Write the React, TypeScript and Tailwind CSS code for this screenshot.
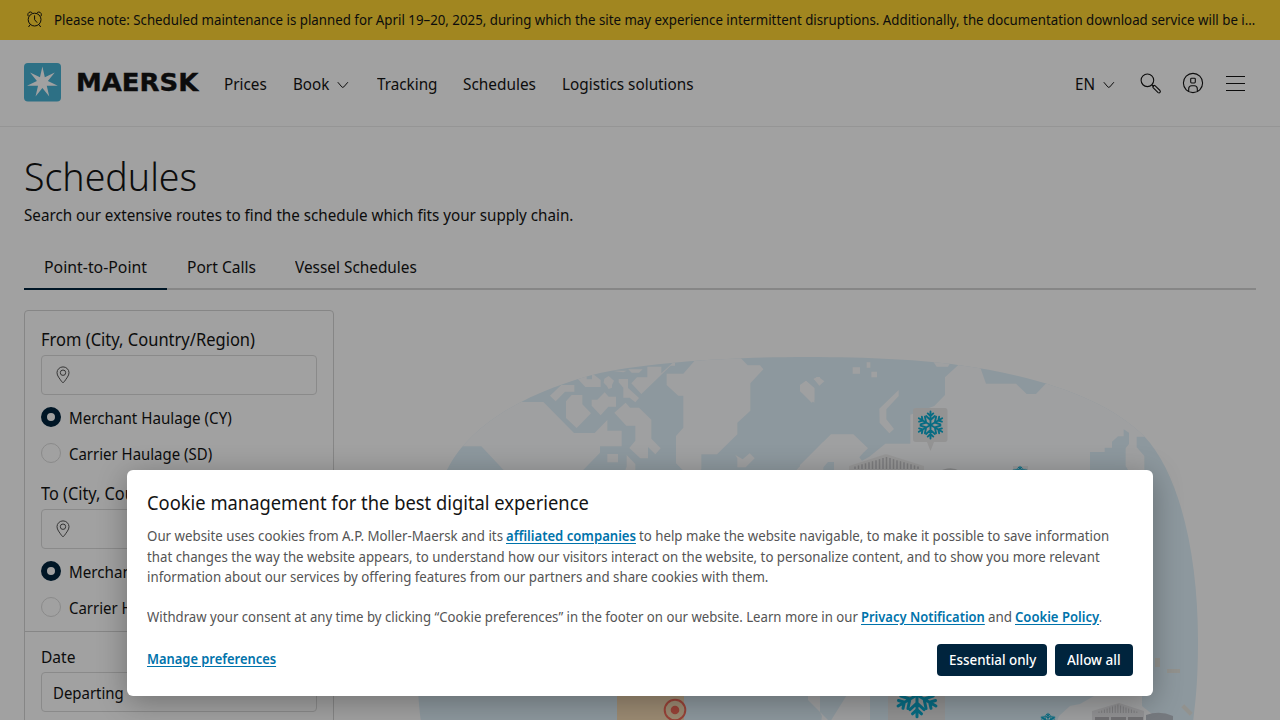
import { useLayoutEffect, useRef, useState } from "react";
import type { ReactNode } from "react";

/* Single-line text that is condensed or widened to an exact measure. */
function T({ w, className = "", children }: { w: number; className?: string; children: ReactNode }) {
  const ref = useRef<HTMLSpanElement>(null);
  const [k, setK] = useState(1);
  useLayoutEffect(() => {
    if (ref.current) setK(w / ref.current.offsetWidth);
  }, [w]);
  return (
    <span className={"flex shrink-0 whitespace-nowrap " + className} style={{ width: w }}>
      <span ref={ref} className="block shrink-0 origin-left" style={{ transform: `scaleX(${k})` }}>
        {children}
      </span>
    </span>
  );
}

const star = Array.from({ length: 14 }, (_, i) => {
  const a = (Math.PI * i) / 7;
  const r = i % 2 ? 5.6 : 15.8;
  return `${(18.4 + r * Math.sin(a)).toFixed(2)},${(19.3 - r * Math.cos(a)).toFixed(2)}`;
}).join(" ");

function Logo() {
  return (
    <svg width="37" height="39" viewBox="0 0 37 39" className="mb-0.5 shrink-0">
      <rect width="37" height="38.6" rx="4" fill="#48b1d3" />
      <polygon points={star} fill="#fff" />
    </svg>
  );
}

function Chevron() {
  return (
    <svg width="12" height="8" viewBox="0 0 12 8" fill="none" stroke="#141414" strokeWidth="1">
      <path d="M.8 1.2 L4.8 5.9 Q5.8 7 6.8 5.9 L10.9 1.2" />
    </svg>
  );
}

function AlarmClock() {
  return (
    <svg width="16" height="17" viewBox="0 0 16 17" fill="none" stroke="#141414" strokeWidth="1" className="mb-0.5">
      <circle cx="7.600" cy="8.6" r="6.4" />
      <path d="M7.600 4.400v4.300l2.600 3M3.200 13.6L1.500 16M12 13.6l1.700 2.400M1.200 5.2C.2 3.400 1.300 1 3.400 1c.9 0 1.500.4 1.900 1.100M14 5.200C15 3.400 13.900 1 11.800 1c-.9 0-1.500.4-1.900 1.100" />
    </svg>
  );
}

function Search() {
  return (
    <svg width="22" height="22" viewBox="0 0 22 22" fill="none" stroke="#141414" strokeWidth="1.1">
      <circle cx="7.4" cy="7.3" r="6.3" />
      <path d="M11.9 11.8l2 2M13.1 14.7q-.8-1 .1-1.9t1.8-.1l5 4.8q.8.9 0 1.9t-1.9.2z" />
    </svg>
  );
}

function Account() {
  return (
    <svg width="22" height="22" viewBox="0 0 22 22" fill="none" stroke="#141414" strokeWidth="1.1">
      <circle cx="11" cy="11" r="9.6" />
      <rect x="8.7" y="6.2" width="4.6" height="4.8" rx=".9" />
      <path d="M6.7 19.3v-2.6q0-3 3-3h2.6q3 0 3 3v2.6" />
    </svg>
  );
}

function Pin() {
  return (
    <svg width="14" height="18" viewBox="0 0 14 18" fill="none" stroke="#545454" strokeWidth="1">
      <path d="M7 16.5Q6.2 16.5 5.6 15.5C3.6 12.400 1 9.800 1 6.700A6 5.800 0 0 1 13 6.700C13 9.800 10.400 12.400 8.400 15.500Q7.800 16.500 7 16.500Z" />
      <circle cx="7" cy="6.700" r="2.700" />
    </svg>
  );
}

function Flake({ x, y, s }: { x: number; y: number; s: number }) {
  return (
    <g transform={`translate(${x} ${y}) scale(${s})`} stroke="#0cacd0" strokeWidth="1.850" strokeLinecap="round" fill="none">
      {[0, 60, 120, 180, 240, 300].map((a) => (
        <path key={a} transform={`rotate(${a})`} d="M0 0V-13.500M0-5L-4.400-9M0-5L4.400-9M0-9L-2.800-11.600M0-9L2.800-11.600" />
      ))}
    </g>
  );
}

const GLOBE =
  "M807 357C870 357 925 360 958 365C1040 376 1108 400 1144 436C1180 474 1198 555 1198 640C1198 680 1196 700 1192 730H422C418 700 417 680 417 640C417 575 428 507 447 470C473 418 540 388 600 373C660 361 740 357 807 357Z";

function WorldMap() {
  return (
    <svg viewBox="334 310 922 410" width="922" height="410" className="block shrink-0">
      <defs>
        <clipPath id="globe">
          <path d={GLOBE} />
        </clipPath>
      </defs>
      <path d={GLOBE} fill="#e0f1fa" />
      <g clipPath="url(#globe)" fill="#fcfdff">
        <g transform="translate(400 340) scale(.33333)">
          <path d="M100 186H430L522 279H584L622 240V272H665V319H600V338L540 400H320L244 319H100Z" />
          <path d="M884 62L850 101H800V135L835 167H850V263L828 288V370L858 400H890L904 388V343H951L1012 283V248L1051 212V130L1090 88L1080 76H1043L1018 50Z" />
          <path d="M484 135H523V155H495L467 184L450 167ZM515 165H547V193L573 220L530 264L498 234V184ZM533 116L560 105V118H576V100L602 120V141H556ZM613 116L626 108L642 122L636 135V143L626 147L620 137L611 128ZM656 117H684V144L717 174L706 187L689 173H670V143L656 127ZM575 179H592L614 157L626 170H648V200H625L602 226L575 197ZM643 218L677 188L690 203H717L754 239V296L782 325L766 343L744 321V355H721L688 324L706 302V257H679ZM742 80H784V100L825 62V77H812L784 104V104L724 162L694 130L711 112H742ZM685 88H728L717 98H695ZM635 92H680L670 97ZM622 342H654V367H622ZM680 345L706 372V400H672L680 380ZM1006 345L1028 358L1049 340L1064 355L1037 382H1012V355Z" />
          <path d="M1200 135L1218 122L1243 145V180L1235 188L1200 153ZM1241 118L1250 111H1260V130ZM1180 400L1270 305V400Z" />
        </g>
        <g transform="translate(800 340) scale(.33333)">
          <path d="M0 140L18 123L43 144V188L0 153ZM41 116L56 111L73 124L58 137ZM158 82H180V101H158ZM200 67H211V83H200ZM214 95H231V112H214ZM238 206L296 150V168L259 208V238L282 267L268 280L239 248ZM398 62L450 70L444 80H410Z" />
          <path d="M0 375L93 283H160L204 325L190 338L178 352L186 362L208 350L256 311H331V224L403 198L435 165V112L475 75L540 80L558 131H648L680 162H708L750 118L1000 240L1040 290H1010V322L1033 348V400H990L977 378V325L987 312V278L971 268V289H954L936 305V323H914V336H870V400H102V366H84L54 400H0Z" />
        </g>
        <path d="M820 680H870V730H820L822 716L820 712ZM1054 730L1059 716L1070 706L1080 704L1094 696L1110 680H1142V706L1162 722V730ZM808 694V700L830 722L850 690Z" />
        <g fill="#e8e7e1">
          <rect x="1155" y="658" width="5" height="9" />
          <rect x="1167" y="669" width="13" height="4" />
          <rect x="-6" y="-2" width="12" height="4" transform="translate(1187 710) rotate(45)" />
        </g>
      </g>
      <path d="M617 690H684V730H617Z" fill="#f7dcb6" />
      <circle cx="675" cy="710" r="10.300" fill="none" stroke="#f26a59" strokeWidth="2" />
      <circle cx="675" cy="710" r="4.300" fill="#f26a59" />
      <path d="M916 408H945Q947.500 408 947.500 411V439Q947.500 442 945 442H934L930.500 451L927 442H916Q913 442 913 439V411Q913 408 916 408Z" fill="#e9e9e9" />
      <Flake x={930.500} y={425} s={1} />
      <path d="M888 680H945V730H888Z" fill="#e7e7e8" />
      <Flake x={917} y={695} s={1.620} />
      <rect x="1013" y="466" width="15" height="10" fill="#ededee" />
      <Flake x={1020} y={474} s={0.580} />
      <Flake x={1048} y={721} s={0.580} />
      <path d="M849 470V466L886 454L924 466V474H849Z" fill="#f0f0f0" />
      <g stroke="#c4c4c7" strokeWidth="1.500">
        {Array.from({ length: 19 }, (_, i) => (
          <path key={i} d={`M${855 + i * 3.500} 469V${457 + Math.abs(i - 9) * 1.050}`} />
        ))}
      </g>
      <path d="M938 472Q950 465 960 471V474H938Z" fill="#d2d5d6" />
      <path d="M1092 720V711L1119 703L1144 711V720Z" fill="#e8e8ea" />
      <g stroke="#c3c3c7" strokeWidth="1">
        {Array.from({ length: 15 }, (_, i) => (
          <path key={i} d={`M${1099 + i * 2.700} 713V${704.500 + Math.abs(i - 7) * 1}`} />
        ))}
      </g>
      <path d="M1095 717H1109V720H1095ZM1111 717H1126V720H1111ZM1128 717H1143V720H1128Z" fill="#b5b3b8" />
      <path d="M1146 715Q1160 710 1173 716V720H1146Z" fill="#bcc1ca" />
    </svg>
  );
}

function Radio({ on, w, children }: { on?: boolean; w: number; children: string }) {
  return (
    <div className="flex h-5 items-center gap-2">
      <span
        className={
          on
            ? "size-5 shrink-0 rounded-full border-[6px] border-[#00243d] bg-white"
            : "size-5 shrink-0 rounded-full border border-[#dbdbdb] bg-white"
        }
      />
      <T w={w} className="pt-0.5">{children}</T>
    </div>
  );
}

function PlaceField({ label, w }: { label: string; w: number }) {
  return (
    <div>
      <div className="flex h-[26px] items-center pb-0.5 text-[17.500px]">
        <T w={w}>{label}</T>
      </div>
      <div className="mt-0.5 flex h-10 items-center rounded border border-[#dbdbdb] bg-white pl-[14px]">
        <Pin />
      </div>
      <div className="mt-3 flex flex-col gap-4">
        <Radio on w={163}>Merchant Haulage (CY)</Radio>
        <Radio w={143}>Carrier Haulage (SD)</Radio>
      </div>
    </div>
  );
}

function SearchPanel() {
  return (
    <section className="h-[420px] w-[310px] shrink-0 rounded-t-sm border border-[#d4d4d4]">
      <div className="flex flex-col gap-[18px] px-4 pt-4 pb-[14px]">
        <PlaceField label="From (City, Country/Region)" w={214} />
        <PlaceField label="To (City, Country/Region)" w={189} />
      </div>
      <div className="border-t border-[#d4d4d4] px-4 pt-[14px]">
        <div className="flex h-6 items-center pb-0.5">
          <T w={34}>Date</T>
        </div>
        <div className="mt-[2px] flex h-10 items-center rounded border border-[#dbdbdb] bg-white pt-0.5 pl-[11px]">
          <T w={71}>Departing</T>
        </div>
      </div>
    </section>
  );
}

function CookieDialog() {
  const link = "font-semibold text-[#0073ab] underline underline-offset-2";
  return (
    <div className="absolute top-[470px] left-[127px] h-[226px] w-[1026px] rounded-md bg-white px-5 pt-[18px] text-sm text-[#545454] shadow-[0_6px_30px_rgba(0,0,0,0.3)]">
      <div className="flex h-[30px] items-center text-xl text-[#141414]">
        <T w={442}>Cookie management for the best digital experience</T>
      </div>
      <div className="mt-2 leading-5">
        <div className="flex h-[20.500px] gap-[3px]">
          <T w={356}>Our website uses cookies from A.P. Moller-Maersk and its</T>
          <T w={130} className={link}>affiliated companies</T>
          <T w={470}>to help make the website navigable, to make it possible to save information</T>
        </div>
        <div className="flex h-[20px]">
          <T w={953}>that changes the way the website appears, to understand how our visitors interact on the website, to personalize content, and to show you more relevant</T>
        </div>
        <div className="flex h-10">
          <T w={621}>information about our services by offering features from our partners and share cookies with them.</T>
        </div>
        <div className="flex h-5">
          <T w={711} className="mr-[3px]">Withdraw your consent at any time by clicking “Cookie preferences” in the footer on our website. Learn more in our</T>
          <T w={124} className={link}>Privacy Notification</T>
          <T w={24} className="mx-[3px]">and</T>
          <T w={84} className={link}>Cookie Policy</T>
          <T w={3}>.</T>
        </div>
      </div>
      <div className="mt-[17px] flex h-8 items-center gap-2">
        <T w={129} className={link + " mr-auto pb-0.5"}>Manage preferences</T>
        <button className="flex h-8 w-[110px] items-center justify-center rounded bg-[#00243d] font-medium text-white">
          <T w={87}>Essential only</T>
        </button>
        <button className="flex h-8 w-[78px] items-center justify-center rounded bg-[#00243d] font-medium text-white">
          <T w={54}>Allow all</T>
        </button>
      </div>
    </div>
  );
}

export default function App() {
  return (
    <div className="relative h-[720px] w-[1280px] overflow-hidden bg-white font-['Noto_Sans',sans-serif] text-base leading-6 text-[#141414]">
      <div className="flex h-10 items-center bg-[#ffd533] pl-[27px] text-sm">
        <AlarmClock />
        <T w={1201} className="ml-[11px]">
          Please note: Scheduled maintenance is planned for April 19–20, 2025, during which the site may experience intermittent disruptions. Additionally, the documentation download service will be i…
        </T>
      </div>

      <header className="flex h-[87px] items-center border-b border-[#ededed] pl-6">
        <Logo />
        <T w={122} className="ml-[15px] font-['DejaVu_Sans',sans-serif] text-[24px] font-bold [-webkit-text-stroke:0.4px_#141414]">MAERSK</T>
        <nav className="ml-[26px] flex items-center pt-[2px]">
          <T w={43}>Prices</T>
          <T w={36} className="ml-[26px]">Book</T>
          <span className="ml-2 pt-0.5"><Chevron /></span>
          <T w={60} className="ml-7">Tracking</T>
          <T w={73} className="ml-[26px]">Schedules</T>
          <T w={132} className="ml-[26px]">Logistics solutions</T>
        </nav>
        <div className="mr-[35px] ml-auto flex items-center">
          <T w={20} className="pt-[2px]">EN</T>
          <span className="ml-2 pt-1"><Chevron /></span>
          <span className="ml-[25px] pt-0.5"><Search /></span>
          <span className="ml-5"><Account /></span>
          <span className="ml-[22px] flex w-[19px] flex-col gap-[6px]">
            <span className="h-px bg-[#141414]" />
            <span className="h-px bg-[#141414]" />
            <span className="h-px bg-[#141414]" />
          </span>
        </div>
      </header>

      <main className="px-6">
        <h1 className="flex h-[76px] items-end pb-[2px] text-[39px] leading-[50px] font-light">
          <T w={173}>Schedules</T>
        </h1>
        <p className="flex h-6">
          <T w={549}>Search our extensive routes to find the schedule which fits your supply chain.</T>
        </p>
        <div className="mt-[18px] flex h-[45px] items-stretch border-b-2 border-[#d4d4d4]">
          <span className="-mb-0.5 flex h-[45px] w-[143px] justify-center border-b-2 border-[#00243d] pt-[10px]">
            <T w={103}>Point-to-Point</T>
          </span>
          <span className="flex w-[109px] justify-center pt-[10px]"><T w={69}>Port Calls</T></span>
          <span className="flex pt-[10px] pl-[19px]"><T w={122}>Vessel Schedules</T></span>
        </div>
        <div className="mt-5 flex">
          <SearchPanel />
          <WorldMap />
        </div>
      </main>

      <div className="absolute inset-0 bg-black/37" />
      <CookieDialog />
    </div>
  );
}
